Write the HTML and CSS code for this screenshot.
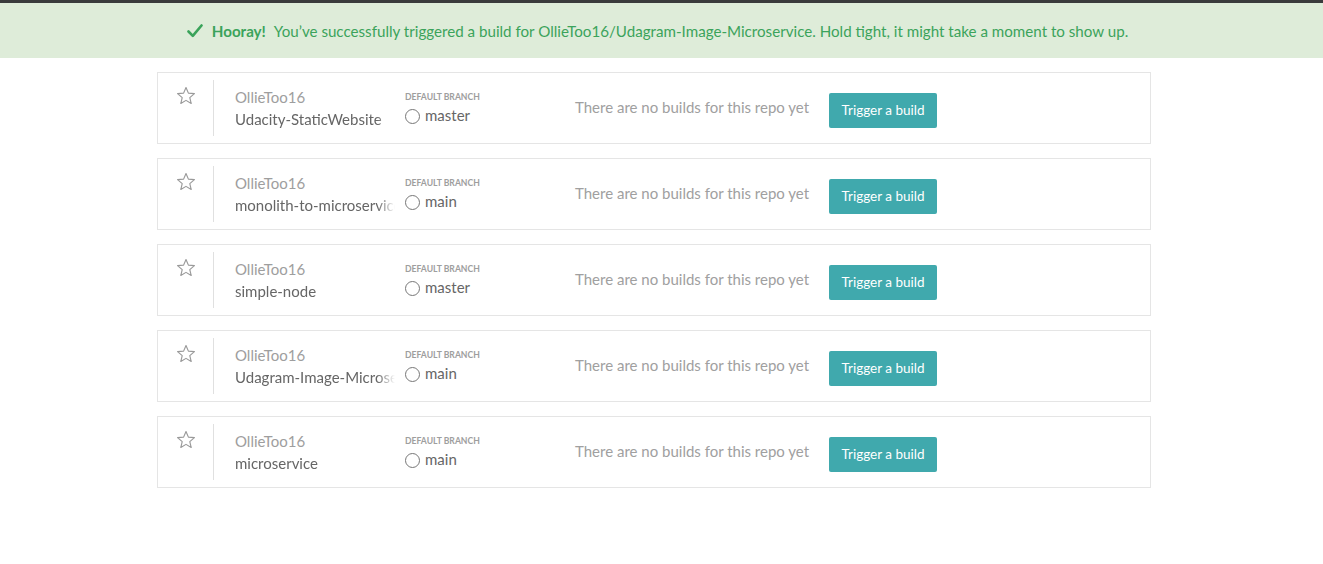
FILE: index.html
```html
<!DOCTYPE html>
<html lang="en">
<head>
<meta charset="utf-8">
<title>Repositories</title>
<link rel="stylesheet" href="styles.css">
</head>
<body>
<div class="topline"></div>
<div class="flash">
  <svg class="check" width="16" height="14" viewBox="0 0 16 14"><path d="M1.5 7.5 L5.8 11.8 L14.5 1.5" fill="none" stroke="#3aa35a" stroke-width="2.6" stroke-linecap="round" stroke-linejoin="round"/></svg>
  <strong>Hooray!</strong>
  <span>You’ve successfully triggered a build for OllieToo16/Udagram-Image-Microservice. Hold tight, it might take a moment to show up.</span>
</div>
<main class="repos">
  <div class="repo">
    <div class="star-col"><svg class="star" width="20" height="19" viewBox="0 0 24 23"><path d="M12 1.8 L14.9 8.6 L22.2 9.2 L16.6 14 L18.3 21.2 L12 17.4 L5.7 21.2 L7.4 14 L1.8 9.2 L9.1 8.6 Z" fill="none" stroke="#9a9a9a" stroke-width="1.4" stroke-linejoin="round"/></svg></div>
    <div class="name-col"><div class="owner">OllieToo16</div><div class="name">Udacity-StaticWebsite</div></div>
    <div class="branch-col"><div class="label">DEFAULT BRANCH</div><div class="branch"><span class="radio"></span>master</div></div>
    <div class="status">There are no builds for this repo yet</div>
    <button class="trigger">Trigger a build</button>
  </div>
  <div class="repo">
    <div class="star-col"><svg class="star" width="20" height="19" viewBox="0 0 24 23"><path d="M12 1.8 L14.9 8.6 L22.2 9.2 L16.6 14 L18.3 21.2 L12 17.4 L5.7 21.2 L7.4 14 L1.8 9.2 L9.1 8.6 Z" fill="none" stroke="#9a9a9a" stroke-width="1.4" stroke-linejoin="round"/></svg></div>
    <div class="name-col"><div class="owner">OllieToo16</div><div class="name">monolith-to-microservices</div></div>
    <div class="branch-col"><div class="label">DEFAULT BRANCH</div><div class="branch"><span class="radio"></span>main</div></div>
    <div class="status">There are no builds for this repo yet</div>
    <button class="trigger">Trigger a build</button>
  </div>
  <div class="repo">
    <div class="star-col"><svg class="star" width="20" height="19" viewBox="0 0 24 23"><path d="M12 1.8 L14.9 8.6 L22.2 9.2 L16.6 14 L18.3 21.2 L12 17.4 L5.7 21.2 L7.4 14 L1.8 9.2 L9.1 8.6 Z" fill="none" stroke="#9a9a9a" stroke-width="1.4" stroke-linejoin="round"/></svg></div>
    <div class="name-col"><div class="owner">OllieToo16</div><div class="name">simple-node</div></div>
    <div class="branch-col"><div class="label">DEFAULT BRANCH</div><div class="branch"><span class="radio"></span>master</div></div>
    <div class="status">There are no builds for this repo yet</div>
    <button class="trigger">Trigger a build</button>
  </div>
  <div class="repo">
    <div class="star-col"><svg class="star" width="20" height="19" viewBox="0 0 24 23"><path d="M12 1.8 L14.9 8.6 L22.2 9.2 L16.6 14 L18.3 21.2 L12 17.4 L5.7 21.2 L7.4 14 L1.8 9.2 L9.1 8.6 Z" fill="none" stroke="#9a9a9a" stroke-width="1.4" stroke-linejoin="round"/></svg></div>
    <div class="name-col"><div class="owner">OllieToo16</div><div class="name">Udagram-Image-Microservice</div></div>
    <div class="branch-col"><div class="label">DEFAULT BRANCH</div><div class="branch"><span class="radio"></span>main</div></div>
    <div class="status">There are no builds for this repo yet</div>
    <button class="trigger">Trigger a build</button>
  </div>
  <div class="repo">
    <div class="star-col"><svg class="star" width="20" height="19" viewBox="0 0 24 23"><path d="M12 1.8 L14.9 8.6 L22.2 9.2 L16.6 14 L18.3 21.2 L12 17.4 L5.7 21.2 L7.4 14 L1.8 9.2 L9.1 8.6 Z" fill="none" stroke="#9a9a9a" stroke-width="1.4" stroke-linejoin="round"/></svg></div>
    <div class="name-col"><div class="owner">OllieToo16</div><div class="name">microservice</div></div>
    <div class="branch-col"><div class="label">DEFAULT BRANCH</div><div class="branch"><span class="radio"></span>main</div></div>
    <div class="status">There are no builds for this repo yet</div>
    <button class="trigger">Trigger a build</button>
  </div>
</main>
</body>
</html>
```

FILE: styles.css
```css
* { box-sizing: border-box; }
html, body { margin: 0; padding: 0; background: #fff; }
body { font-family: "Lato", "Liberation Sans", sans-serif; color: #666; }

.topline { height: 3px; background: #3a3b3c; }

.flash {
  height: 55px;
  background: #deecd9;
  color: #3ba35b;
  display: flex;
  align-items: center;
  justify-content: center;
  font-size: 15.15px;
  padding-right: 8px;
}
.flash .check { margin-right: 9px; margin-top: 1px; }
.flash strong { font-weight: 700; margin-right: 8px; }

.repos {
  width: 994px;
  margin: 14px 0 0 157px;
  display: flex;
  flex-direction: column;
  gap: 14px;
}

.repo {
  height: 72px;
  border: 1px solid #e5e5e5;
  display: flex;
  align-items: stretch;
  padding: 7px 0;
}

.star-col {
  width: 56px;
  border-right: 1px solid #e0e0e0;
  display: flex;
  justify-content: center;
  align-items: flex-start;
  padding-top: 6px;
  padding-left: 1px;
}

.name-col {
  width: 190px;
  padding: 8px 9px 0 21px;
}
.owner { font-size: 15px; color: #9e9e9e; line-height: 18px; white-space: nowrap; overflow: hidden; }
.name {
  font-size: 15px; color: #666; line-height: 18px; margin-top: 4px;
  white-space: nowrap; overflow: hidden;
  -webkit-mask-image: linear-gradient(to right, #000 calc(100% - 18px), transparent);
  mask-image: linear-gradient(to right, #000 calc(100% - 18px), transparent);
}

.branch-col {
  width: 171px;
  padding-left: 1px;
  padding-top: 12px;
}
.label { font-size: 8.6px; font-weight: 700; color: #9e9e9e; line-height: 11px; }
.branch { display: flex; align-items: center; font-size: 15px; color: #666; margin-top: 3px; line-height: 18px; }
.radio {
  width: 15px; height: 15px;
  border: 1px solid #777;
  border-radius: 50%;
  margin-right: 5px;
  margin-top: 2px;
  flex: none;
}

.status {
  align-self: center;
  width: 254px;
  font-size: 15px;
  color: #a0a0a0;
  margin-top: -3px;
}

.trigger {
  align-self: center;
  margin-top: 4px;
  height: 35px;
  width: 108px;
  border: none;
  border-radius: 2px;
  background: #40a9ad;
  color: #fff;
  font-family: inherit;
  font-size: 13.5px;
  padding: 0;
}
```
